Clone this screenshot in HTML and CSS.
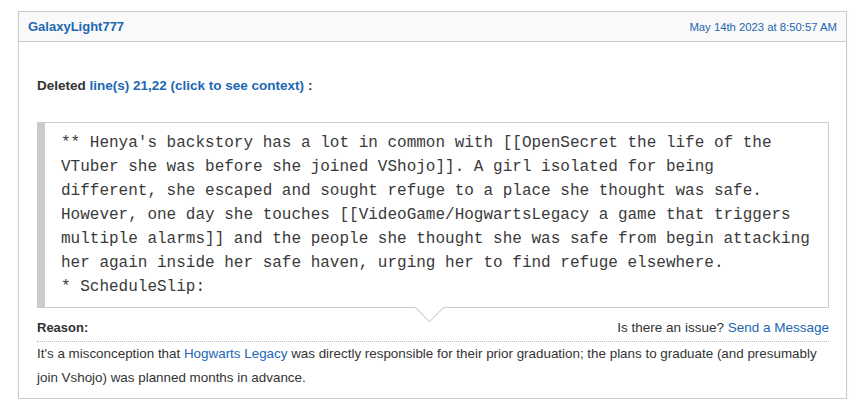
FILE: index.html
```html
<!DOCTYPE html>
<html lang="en">
<head>
  <meta charset="UTF-8" />
  <title>Edit history</title>
  <link rel="stylesheet" href="styles.css">
</head>
<body>
  <div class="edit">
    <div class="edit-head">
      <a class="user" href="#">GalaxyLight777</a>
      <span class="date">May 14th 2023 at 8:50:57 AM</span>
    </div>
    <div class="edit-body">
      <div class="deleted">Deleted <a href="#">line(s) 21,22 (click to see context)</a> :</div>
      <div class="code">** Henya's backstory has a lot in common with [[OpenSecret the life of the VTuber she was before she joined VShojo]]. A girl isolated for being different, she escaped and sought refuge to a place she thought was safe. However, one day she touches [[VideoGame/HogwartsLegacy a game that triggers multiple alarms]] and the people she thought she was safe from begin attacking her again inside her safe haven, urging her to find refuge elsewhere.
* ScheduleSlip:</div>
      <div class="reason-head">
        <span class="reason-label">Reason:</span>
        <span class="issue">Is there an issue? <a href="#">Send a Message</a></span>
      </div>
      <div class="reason-text">It's a misconception that <a href="#">Hogwarts Legacy</a> was directly responsible for their prior graduation; the plans to graduate (and presumably join Vshojo) was planned months in advance.</div>
    </div>
  </div>
</body>
</html>
```

FILE: styles.css
```css
body {
  margin: 0;
  padding: 11px 0 0 18px;
  background: #fff;
  font-family: "Liberation Sans", Arial, sans-serif;
  color: #333;
}
a {
  color: #2167b3;
  text-decoration: none;
}
.edit {
  width: 829px;
  box-sizing: border-box;
  border: 1px solid #ccc;
  box-shadow: 0 1px 2px rgba(0,0,0,0.08);
}
.edit-head {
  display: flex;
  justify-content: space-between;
  align-items: center;
  height: 29px;
  padding: 0 9px;
  background: #f9f9f9;
  border-bottom: 1px solid #ccc;
}
.user {
  font-size: 13px;
  font-weight: bold;
}
.date {
  font-size: 11.3px;
  color: #2167b3;
}
.edit-body {
  padding: 32px 17px 8px 18px;
}
.deleted {
  font-size: 13.5px;
  font-weight: bold;
  line-height: 24px;
}
.code {
  position: relative;
  margin-top: 24px;
  padding: 8px 16px;
  border: 1px solid #ccc;
  border-left: 8px solid #cbcbd0;
  font-family: "Liberation Mono", "Courier New", monospace;
  font-size: 16px;
  line-height: 24px;
  color: #3a3a3a;
  white-space: pre-wrap;
}
.code::after {
  content: "";
  position: absolute;
  left: 374px;
  bottom: -11px;
  width: 20px;
  height: 20px;
  background: #fff;
  border-right: 1px solid #ccc;
  border-bottom: 1px solid #ccc;
  transform: rotate(45deg);
}
.reason-head {
  display: flex;
  justify-content: space-between;
  align-items: baseline;
  margin-top: 10px;
  padding-bottom: 3px;
  border-bottom: 1px dotted #bbb;
  line-height: 20px;
}
.reason-label {
  font-size: 13px;
  font-weight: bold;
}
.issue {
  font-size: 13.5px;
}
.reason-text {
  font-size: 13.4px;
  line-height: 24px;
}
```
